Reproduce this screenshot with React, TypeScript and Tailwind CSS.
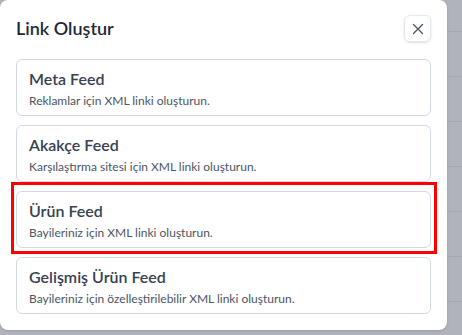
import React from "react";

const items = [
  { t: "Meta Feed", d: "Reklamlar için XML linki oluşturun." },
  { t: "Akakçe Feed", d: "Karşılaştırma sitesi için XML linki oluşturun." },
  { t: "Ürün Feed", d: "Bayileriniz için XML linki oluşturun." },
  { t: "Gelişmiş Ürün Feed", d: "Bayileriniz için özelleştirilebilir XML linki oluşturun." },
];

export default function App() {
  return (
    <div
      className="relative w-[462px] h-[335px] overflow-hidden bg-[#b0b3b9]"
      style={{ fontFamily: 'Lato, "Noto Sans", sans-serif' }}
    >
      <div className="flex flex-col">
        <div className="h-[31px]" />
        {[0, 1, 2, 3, 4, 5, 6].map((i) => (
          <div key={i} className="h-[45px] border-t border-[#a4a7ae]" />
        ))}
      </div>
      <div className="absolute left-0 top-0 w-[447px] h-[330px] bg-white rounded-lg shadow-sm px-4">
        <div className="flex items-center justify-between pt-[15px] h-[42px]">
          <h2 className="text-[18px] font-semibold text-[#1f2937] leading-none -mt-[2px]">Link Oluştur</h2>
          <button className="w-[27px] h-[27px] flex items-center justify-center rounded-md border border-[#e5e7eb] shadow-sm text-[#4b5563]">
            <svg width="12" height="12" viewBox="0 0 12 12" fill="none" stroke="currentColor" strokeWidth="1.3" strokeLinecap="round">
              <path d="M1.5 1.5L10.5 10.5M10.5 1.5L1.5 10.5" />
            </svg>
          </button>
        </div>
        <div className="flex flex-col gap-[9px] mt-[17px]">
          {items.map((it) => (
            <div key={it.t} className="h-[57px] rounded-md border border-[#d3d9e2] px-3 pt-[8px]">
              <div className="text-[16px] font-semibold text-[#374151] leading-[22px]">{it.t}</div>
              <div className="text-[12px] text-[#4b5563] leading-[18px] mt-[2px]">{it.d}</div>
            </div>
          ))}
        </div>
      </div>
      <div className="absolute left-[11px] top-[182px] w-[426px] h-[72px] border-[3px] border-[#ff0000]" />
    </div>
  );
}
